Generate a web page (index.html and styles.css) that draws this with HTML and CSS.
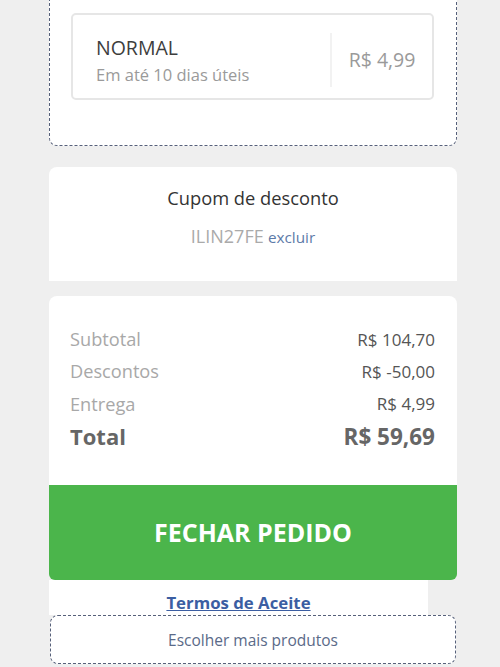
FILE: index.html
```html
<!DOCTYPE html>
<html lang="pt-BR">
<head>
    <meta charset="UTF-8">
    <meta name="viewport" content="width=device-width, initial-scale=1.0">
    <title>Carrinho</title>
    <link rel="stylesheet" href="styles.css">
</head>
<body>
    <div class="checkout">
        <div class="shipping">
            <div class="option">
                <div class="option-info">
                    <span class="option-name">NORMAL</span>
                    <span class="option-time">Em até 10 dias úteis</span>
                </div>
                <div class="option-price">R$ 4,99</div>
            </div>
        </div>

        <div class="coupon">
            <h3>Cupom de desconto</h3>
            <p><span class="code">ILIN27FE</span> <a href="#" class="remove">excluir</a></p>
        </div>

        <div class="summary">
            <div class="row"><span>Subtotal</span><span class="value">R$ 104,70</span></div>
            <div class="row"><span>Descontos</span><span class="value">R$ -50,00</span></div>
            <div class="row"><span>Entrega</span><span class="value">R$ 4,99</span></div>
            <div class="row total"><span>Total</span><span class="value">R$ 59,69</span></div>
        </div>

        <button class="finish">FECHAR PEDIDO</button>

        <div class="terms"><a href="#">Termos de Aceite</a></div>

        <a href="#" class="more">Escolher mais produtos</a>
    </div>
</body>
</html>
```

FILE: styles.css
```css
*
{
  margin: 0;
  padding: 0;
  box-sizing: border-box;
}
body{
  background-color: #efefef;
  font-family: "Open Sans", "Liberation Sans", sans-serif;
  height: 667px;
  overflow: hidden;
}
.checkout{
  width: 408px;
  margin-left: 49px;
}
.shipping{
  margin-top: -20px;
  padding: 33px 22px 45px 21px;
  background: #fff;
  border: 1.5px dashed #56607a;
  border-top: none;
  border-radius: 0 0 8px 8px;
}
.shipping .option{
  display: flex;
  height: 87px;
  border: 2px solid #e6e6e6;
  border-radius: 5px;
}
.shipping .option-info{
  flex: 1;
  display: flex;
  flex-direction: column;
  justify-content: center;
  padding: 11px 0 0 23px;
}
.shipping .option-name{
  font-size: 19.5px;
  line-height: 27px;
  color: #3d3d3d;
  margin-top: -2px;
}
.shipping .option-time{
  font-size: 16.5px;
  line-height: 27px;
  color: #9a9a9a;
}
.shipping .option-price{
  width: 102px;
  margin: 18px 0 11px;
  border-left: 2px solid #f2f2f2;
  display: flex;
  align-items: center;
  justify-content: center;
  font-size: 19.5px;
  color: #9a9a9a;
  padding-bottom: 2px;
}
.coupon{
  margin-top: 21px;
  height: 114px;
  background: #fff;
  border-radius: 8px 8px 0 0;
  text-align: center;
  padding-top: 18px;
}
.coupon h3{
  font-weight: normal;
  font-size: 18.3px;
  line-height: 26px;
  color: #333;
}
.coupon p{
  margin-top: 12px;
  line-height: 26px;
}
.coupon .code{
  font-size: 18px;
  color: #aaa;
}
.coupon .remove{
  font-size: 15.3px;
  color: #5d7aa8;
  text-decoration: none;
}
.summary{
  margin-top: 15px;
  background: #fff;
  border-radius: 8px 8px 0 0;
  padding: 27px 22px 33px 21px;
}
.summary .row{
  display: flex;
  justify-content: space-between;
  align-items: center;
  height: 32.3px;
  font-size: 18.2px;
  color: #a8a8a8;
}
.summary .row .value{
  color: #555;
  font-size: 17px;
}
.summary .row.total{
  font-size: 22px;
  font-weight: bold;
  color: #666;
}
.summary .row.total .value{
  font-size: 22.5px;
  color: #666;
}
.finish{
  display: block;
  width: 100%;
  height: 95px;
  border: none;
  border-radius: 0 0 6px 6px;
  background: #4bb54b;
  color: #fff;
  font-family: "Open Sans", "Liberation Sans", sans-serif;
  font-size: 25px;
  font-weight: bold;
  padding-bottom: 2px;
}
.terms{
  width: 379px;
  height: 35px;
  background: #fff;
  text-align: center;
  padding-top: 11px;
}
.terms a{
  font-size: 16.8px;
  font-weight: bold;
  line-height: 24px;
  color: #3b5ea2;
}
.more{
  display: flex;
  align-items: center;
  justify-content: center;
  height: 49px;
  margin-left: 1px;
  width: 406px;
  background: #fff;
  border: 1.5px dashed #56607a;
  border-radius: 8px;
  font-size: 15.5px;
  color: #5a6a88;
  text-decoration: none;
}
```
